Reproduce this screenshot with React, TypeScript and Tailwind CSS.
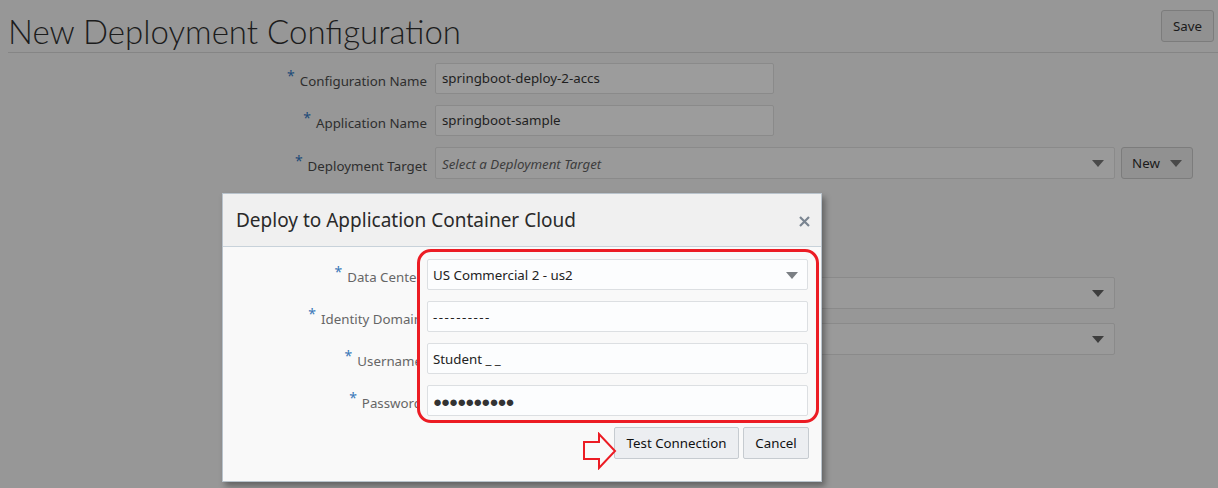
import { ReactNode } from "react"

const font = { fontFamily: '"Noto Sans", "Open Sans", sans-serif' }

function Caret({ color = "#555" }: { color?: string }) {
  return (
    <svg width="12" height="7" viewBox="0 0 12 7">
      <path d="M0 0 L12 0 L6 7 Z" fill={color} />
    </svg>
  )
}

function PageRow({ label, children }: { label: string; children: ReactNode }) {
  return (
    <div className="flex items-center gap-2">
      <div className="w-[427px] pt-[5px] text-right text-[13.3px] text-[#2e2e2e]">
        {label && <span className="relative -top-[5px] mr-[5px] text-[14px] text-[#1d4a78]">*</span>}
        {label}
      </div>
      {children}
    </div>
  )
}

function DialogRow({ label, children }: { label: string; children: ReactNode }) {
  return (
    <div className="flex items-center gap-[5px]">
      <div className="w-[199px] whitespace-nowrap pt-[5px] text-right text-[13.3px] text-[#666]">
        <span className="relative -top-[5px] mr-[5px] text-[14px] text-[#3a78b8]">*</span>
        {label}
      </div>
      <div className="relative z-10 flex h-[31px] w-[381px] items-center rounded-[2px] border border-[#dcdfe2] bg-[#fcfdfe] px-[5px] pt-[2px] text-[13.3px] text-[#222]">
        {children}
      </div>
    </div>
  )
}

export default function App() {
  return (
    <div className="relative h-[488px] w-[1218px] overflow-hidden bg-[#979797]" style={font}>
      {/* Page header */}
      <header className="ml-2 flex h-[53px] items-start justify-between border-b border-[#858585] pr-1">
        <h1
          className="mt-[11px] text-[33px] font-light leading-[40px] text-[#1c1c1c]"
          style={{ fontFamily: 'Lato, "Noto Sans", sans-serif' }}
        >
          New Deployment Configuration
        </h1>
        <button className="mt-[10px] h-[32px] w-[53px] rounded-[3px] border border-[#7c7c7c] bg-[#919191] pt-[2px] text-[13.3px] text-[#1a1a1a]">
          Save
        </button>
      </header>

      {/* Page form */}
      <div className="mt-[10px] flex flex-col gap-[11px]">
        <PageRow label="Configuration Name">
          <div className="flex h-[31px] w-[339px] items-center rounded-[2px] border border-[#8a8a8a] bg-[#9c9c9c] px-[6px] pt-[1px] text-[13.3px] text-[#1f1f1f]">
            springboot-deploy-2-accs
          </div>
        </PageRow>
        <PageRow label="Application Name">
          <div className="flex h-[31px] w-[339px] items-center rounded-[2px] border border-[#8a8a8a] bg-[#9c9c9c] px-[6px] pt-[1px] text-[13.3px] text-[#1f1f1f]">
            springboot-sample
          </div>
        </PageRow>
        <PageRow label="Deployment Target">
          <div className="flex h-[32px] w-[680px] items-center justify-between rounded-[2px] border border-[#8a8a8a] bg-[#9a9a9a] pl-[6px] pr-[10px] text-[13.3px] italic text-[#3d3d3d]">
            <span className="pt-[3px]">Select a Deployment Target</span>
            <Caret color="#4a4a4a" />
          </div>
          <button className="-ml-[2px] flex h-[32px] w-[72px] items-center justify-center gap-[10px] rounded-[3px] border border-[#7c7c7c] bg-[#919191] text-[13.3px] text-[#1a1a1a]">
            <span className="pt-[2px]">New</span>
            <Caret color="#4a4a4a" />
          </button>
        </PageRow>
        <div className="mt-[87px] flex flex-col gap-[14px]">
          <PageRow label="">
            <div className="flex h-[32px] w-[680px] items-center justify-end rounded-[2px] border border-[#8a8a8a] bg-[#9a9a9a] pr-[10px]">
              <Caret color="#3e3e3e" />
            </div>
          </PageRow>
          <PageRow label="">
            <div className="flex h-[32px] w-[680px] items-center justify-end rounded-[2px] border border-[#8a8a8a] bg-[#9a9a9a] pr-[10px]">
              <Caret color="#3e3e3e" />
            </div>
          </PageRow>
        </div>
      </div>

      {/* Dialog */}
      <div className="absolute left-[222px] top-[193px] z-20 flex h-[289px] w-[600px] flex-col border border-[#b9c3cc] bg-[#f9f9f9] shadow-[3px_4px_6px_rgba(0,0,0,0.35)]">
        <div className="flex h-[53px] shrink-0 items-center justify-between border-b border-[#c8d2da] bg-[#f0f0f0] pl-[13px] pr-[11px]">
          <span className="text-[19px] text-[#2a2a2a]">Deploy to Application Container Cloud</span>
          <svg width="11" height="11" viewBox="0 0 11 11" className="mt-[3px]">
            <path d="M1 1 L10 10 M10 1 L1 10" stroke="#7a8591" strokeWidth="2.2" />
          </svg>
        </div>

        <div className="relative flex flex-col pt-[12px]">
          {/* red annotation frame */}
          <div className="absolute left-[194px] top-[2px] h-[174px] w-[402px] rounded-[14px] border-[3px] border-[#ec1c24] bg-[#f9f9f9]" />

          <div className="flex flex-col gap-[11px]">
            <DialogRow label="Data Center">
              <span className="flex-1">US Commercial 2 - us2</span>
              <span className="mr-[4px]">
                <Caret color="#7b7f84" />
              </span>
            </DialogRow>
            <DialogRow label="Identity Domain">
              <span className="tracking-[1.5px]">----------</span>
            </DialogRow>
            <DialogRow label="Username">Student _ _</DialogRow>
            <DialogRow label="Password">
              <span className="text-[15px] tracking-[-1px] text-[#333]">●●●●●●●●●●</span>
            </DialogRow>
          </div>

          <div className="relative mt-[11px] flex justify-end gap-[4px] pr-[12px]">
            <svg width="34" height="38" viewBox="0 0 34 38" className="absolute left-[360px] top-[5px]">
              <path d="M1 10 L16 10 L16 2 L32 19 L16 36 L16 27 L1 27 Z" fill="none" stroke="#ec1c24" strokeWidth="2" />
            </svg>
            <button className="h-[32px] w-[125px] rounded-[2px] border border-[#c6cbd0] bg-[#eceef1] pt-[2px] text-[13.3px] text-[#111]">
              Test Connection
            </button>
            <button className="h-[32px] w-[66px] rounded-[2px] border border-[#c6cbd0] bg-[#eceef1] pt-[2px] text-[13.3px] text-[#111]">
              Cancel
            </button>
          </div>
        </div>
      </div>
    </div>
  )
}
